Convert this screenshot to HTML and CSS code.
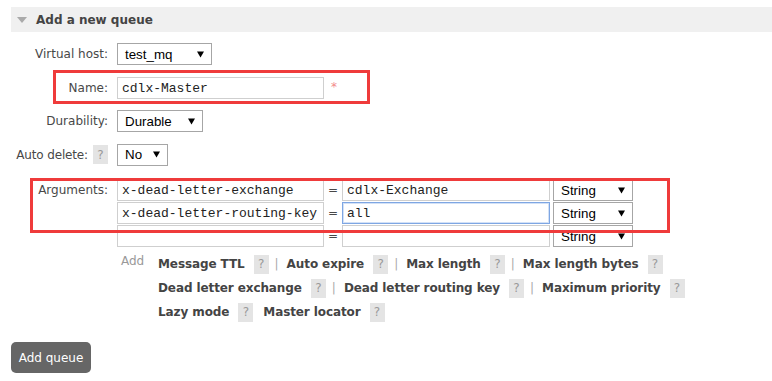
FILE: index.html
```html
<!DOCTYPE html>
<html>
<head>
<meta charset="utf-8">
<link rel="stylesheet" href="styles.css">
</head>
<body>
<div class="page">
  <div class="head">
    <svg class="tri" width="10" height="6" viewBox="0 0 10 6"><path d="M0 0H10L5 6Z" fill="#aaa"/></svg>
    <span>Add a new queue</span>
  </div>

  <div class="form">
    <div class="row r-vhost">
      <div class="lbl">Virtual host:</div>
      <div class="sel w-vhost"><span>test_mq</span><svg class="arr" width="7" height="7" viewBox="0 0 7 7"><path d="M0 0.5H7L3.5 6.5Z" fill="#000"/></svg></div>
    </div>

    <div class="row r-name">
      <div class="lbl">Name:</div>
      <div class="txt w-name">cdlx-Master</div>
      <span class="req">*</span>
    </div>

    <div class="row r-dur">
      <div class="lbl">Durability:</div>
      <div class="sel w-dur"><span>Durable</span><svg class="arr" width="7" height="7" viewBox="0 0 7 7"><path d="M0 0.5H7L3.5 6.5Z" fill="#000"/></svg></div>
    </div>

    <div class="row r-auto">
      <div class="lbl">Auto delete: <span class="help">?</span></div>
      <div class="sel w-no"><span>No</span><svg class="arr" width="7" height="7" viewBox="0 0 7 7"><path d="M0 0.5H7L3.5 6.5Z" fill="#000"/></svg></div>
    </div>

    <div class="row r-args">
      <div class="lbl lbl-top">Arguments:</div>
      <div class="args">
        <div class="txt k">x-dead-letter-exchange</div>
        <div class="eq">=</div>
        <div class="txt v">cdlx-Exchange</div>
        <div class="sel w-str"><span>String</span><svg class="arr" width="7" height="7" viewBox="0 0 7 7"><path d="M0 0.5H7L3.5 6.5Z" fill="#000"/></svg></div>

        <div class="txt k">x-dead-letter-routing-key</div>
        <div class="eq">=</div>
        <div class="txt v focus">all</div>
        <div class="sel w-str"><span>String</span><svg class="arr" width="7" height="7" viewBox="0 0 7 7"><path d="M0 0.5H7L3.5 6.5Z" fill="#000"/></svg></div>

        <div class="txt k"></div>
        <div class="eq">=</div>
        <div class="txt v"></div>
        <div class="sel w-str"><span>String</span><svg class="arr" width="7" height="7" viewBox="0 0 7 7"><path d="M0 0.5H7L3.5 6.5Z" fill="#000"/></svg></div>
      </div>
    </div>

    <div class="row r-links">
      <div class="lbl"></div>
      <div class="addwrap">
        <div class="addword">Add</div>
        <div class="links">
          <div class="lrow"><span class="lk">Message TTL</span><span class="help">?</span><span class="sep">|</span><span class="lk">Auto expire</span><span class="help">?</span><span class="sep">|</span><span class="lk">Max length</span><span class="help">?</span><span class="sep">|</span><span class="lk">Max length bytes</span><span class="help">?</span></div>
          <div class="lrow"><span class="lk">Dead letter exchange</span><span class="help">?</span><span class="sep">|</span><span class="lk">Dead letter routing key</span><span class="help">?</span><span class="sep">|</span><span class="lk">Maximum priority</span><span class="help">?</span></div>
          <div class="lrow"><span class="lk">Lazy mode</span><span class="help">?</span><span class="lk lk2">Master locator</span><span class="help">?</span></div>
        </div>
      </div>
    </div>
  </div>

  <button class="btn">Add queue</button>

  <div class="mark mark1"></div>
  <div class="mark mark2"></div>
</div>
</body>
</html>
```

FILE: styles.css
```css
html, body {
  margin: 0;
  background: #fff;
}
body {
  font-family: "DejaVu Sans", Verdana, sans-serif;
  font-size: 12px;
  color: #484848;
}
.page {
  position: relative;
  padding: 7px 0 0 11px;
  height: 374px;
  box-sizing: border-box;
}
.head {
  height: 25px;
  background: #f0f0f0;
  display: flex;
  align-items: center;
  padding-left: 6px;
  font-weight: bold;
  color: #444;
}
.tri {
  margin-right: 9px;
  margin-top: 1px;
}
.form {
  padding-top: 11px;
  display: flex;
  flex-direction: column;
}
.row {
  display: flex;
  align-items: center;
  height: 22px;
}
.lbl {
  width: 97px;
  margin-right: 9px;
  text-align: right;
  white-space: nowrap;
  display: flex;
  justify-content: flex-end;
  align-items: center;
}
.lbl-top {
  align-self: flex-start;
  height: 22px;
}
.r-name { margin-top: 12px; }
.r-dur { margin-top: 11px; }
.r-auto { margin-top: 11px; height: 23px; }
.r-auto .lbl { letter-spacing: -0.15px; }
.r-args { margin-top: 13px; height: auto; align-items: flex-start; }
.r-links { margin-top: 5px; height: auto; align-items: flex-start; }

.sel {
  box-sizing: border-box;
  height: 22px;
  border: 1px solid #a6a6a6;
  background: #fff;
  display: flex;
  align-items: center;
  justify-content: space-between;
  padding: 0 7px 0 7px;
  font-family: "Liberation Sans", Arial, sans-serif;
  font-size: 13.33px;
  color: #000;
}
.arr { flex: none; }
.w-vhost { width: 95px; }
.w-dur { width: 86px; }
.w-no { width: 51px; }
.w-str { width: 80px; }

.txt {
  box-sizing: border-box;
  height: 22px;
  border: 1px solid #cfcfcf;
  background: #fff;
  padding: 0 4px;
  display: flex;
  align-items: center;
  font-family: "Liberation Mono", "Courier New", monospace;
  font-size: 13px;
  color: #222;
  white-space: nowrap;
  overflow: hidden;
}
.w-name { width: 207px; }
.req {
  color: #f28a8a;
  margin-left: 7px;
  font-size: 12px;
  align-self: flex-start;
  margin-top: 3px;
}
.help {
  display: inline-flex;
  align-items: center;
  justify-content: center;
  width: 15px;
  height: 19px;
  background: #e4e4e4;
  color: #999;
  font-weight: normal;
  font-size: 12px;
  margin-left: 5px;
  letter-spacing: 0;
}
.args {
  display: grid;
  grid-template-columns: 207px 18px 208px 80px;
  column-gap: 0;
  row-gap: 1px;
  grid-auto-rows: 22px;
}
.args .w-str { margin-left: 3px; width: 80px; }
.eq {
  display: flex;
  align-items: center;
  justify-content: center;
  color: #484848;
}
.txt.focus {
  border-color: #7ea6e3;
  box-shadow: inset 0 0 0 1px #d3e1f6;
}
.addwrap {
  display: flex;
  align-items: flex-start;
}
.addword {
  color: #999;
  width: 37px;
  padding-left: 4px;
  line-height: 18px;
}
.links {
  display: flex;
  flex-direction: column;
}
.lrow {
  display: flex;
  align-items: center;
  height: 24px;
  white-space: nowrap;
}
.lk {
  font-weight: bold;
  color: #444;
  letter-spacing: -0.1px;
}
.lrow .help {
  margin-left: 9px;
}
.sep {
  color: #aaa;
  margin: 0 8px 0 6px;
}
.lk2 { margin-left: 10px; }

.btn {
  display: block;
  margin-top: 18px;
  width: 80px;
  height: 31px;
  border: none;
  border-radius: 5px;
  background: #666;
  color: #fff;
  font-family: "DejaVu Sans", Verdana, sans-serif;
  font-size: 12px;
  padding: 0;
}
.mark {
  position: absolute;
  border: 3px solid #ef3b3b;
  box-sizing: border-box;
  pointer-events: none;
}
.mark1 {
  left: 53px;
  top: 70px;
  width: 317px;
  height: 34px;
}
.mark2 {
  left: 30px;
  top: 178px;
  width: 640px;
  height: 55px;
}
```
